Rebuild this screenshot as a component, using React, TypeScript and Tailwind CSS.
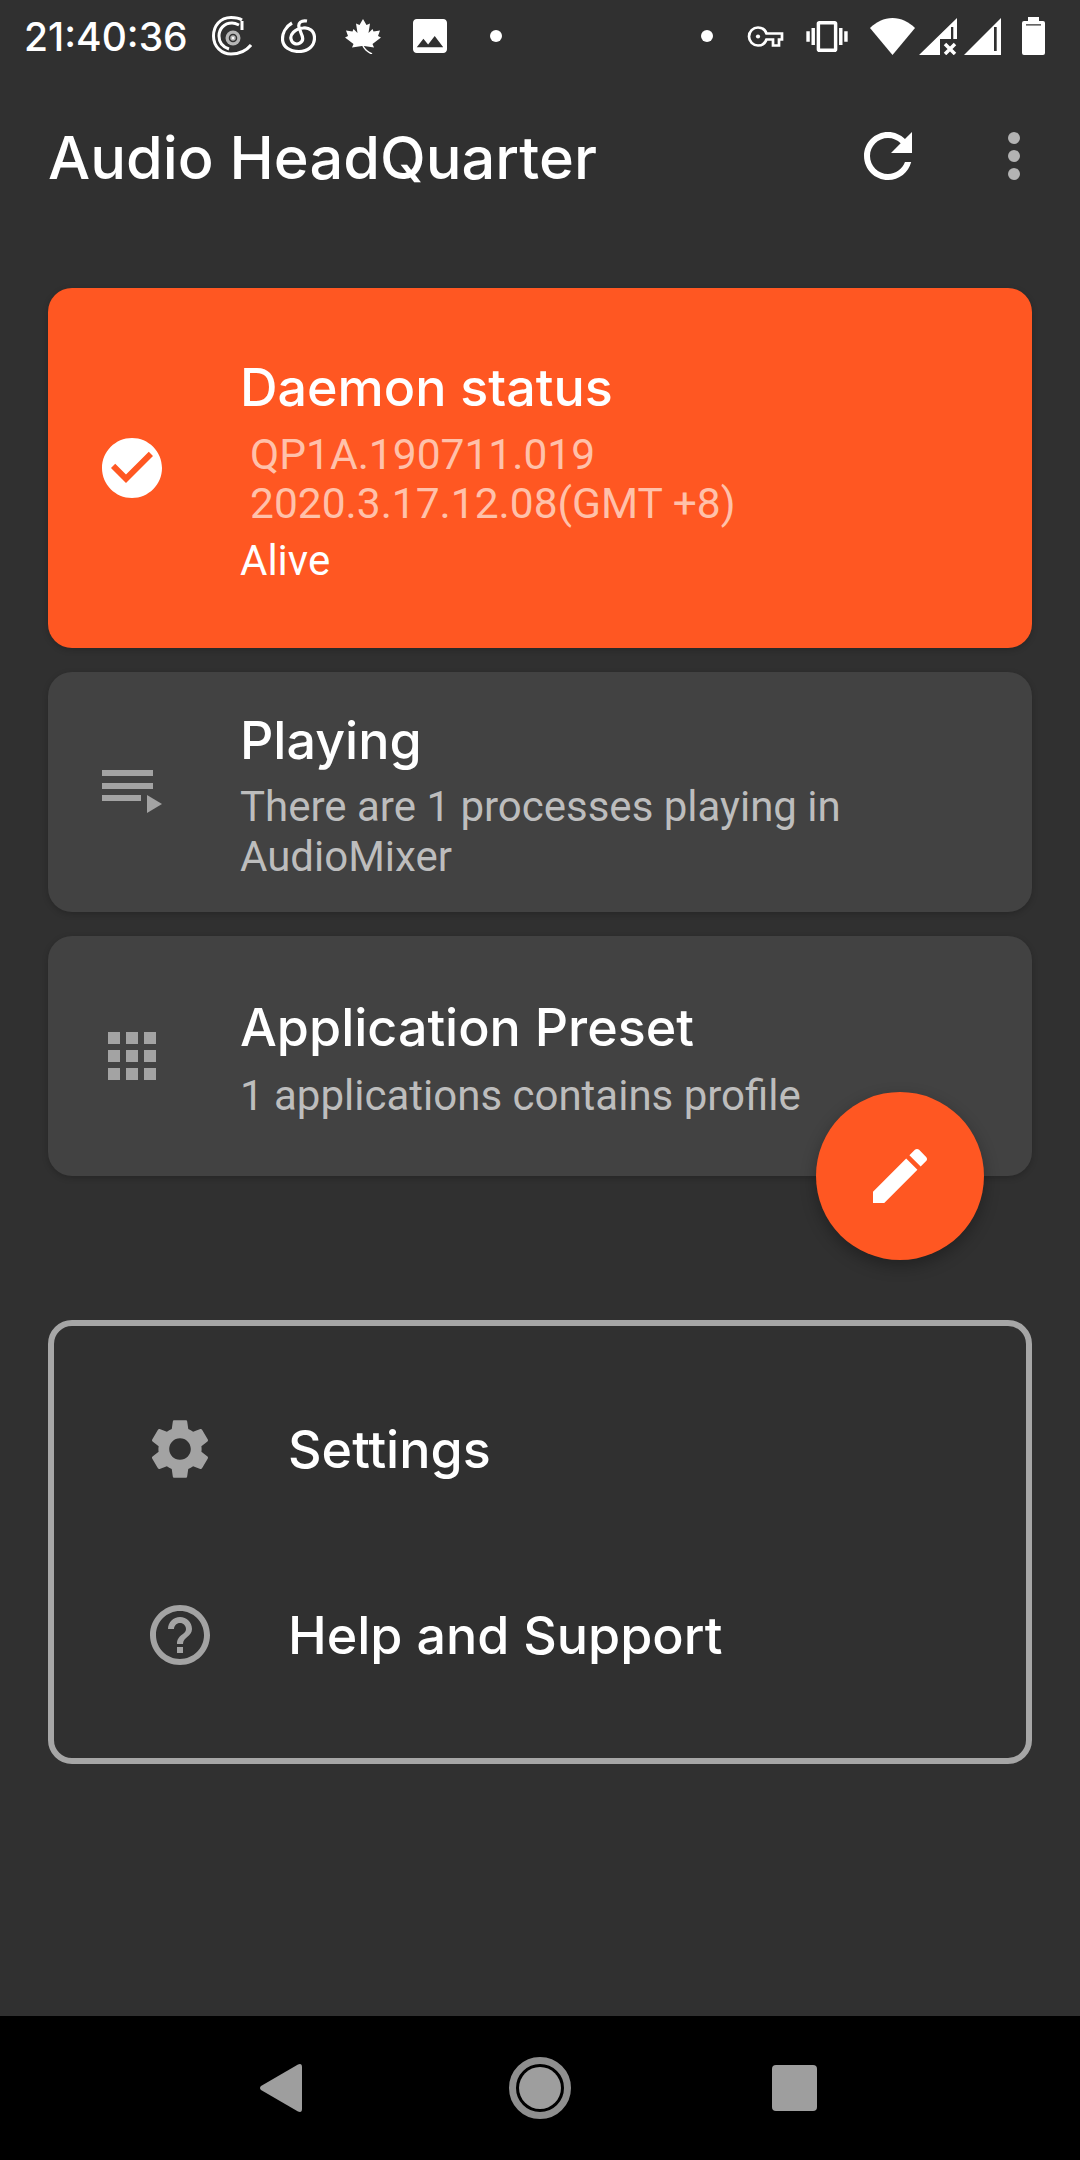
import type { ReactNode } from "react";

const GOOGLE = "font-['Inter','Noto_Sans',sans-serif]";

const StatusBar = () => (
  <div className="h-[72px] flex items-center justify-between pl-[24px] pr-[35px] text-white shrink-0">
    <div className="flex items-center">
      <span className={`${GOOGLE} text-[39px] leading-none w-[161px] font-[450]`}>21:40:36</span>
      {/* player notification icon */}
      <svg width="40" height="40" viewBox="0 0 40 40" className="ml-[27px]" fill="none" stroke="white" strokeWidth="3">
        <path d="M30 4 C27 2 23 1.500 19 1.500 C8 1.500 1.500 10 1.500 20 C1.500 31 10 38 19 38 C27 38 34 35 39 29" />
        <path d="M30 5 V14 M27 9 C25 8 22 7 20 7 C12 7 7 13 7 20 C7 27 11 31 17 33" />
        <circle cx="21" cy="22" r="7.500" fill="#b5b5b5" stroke="none" />
        <circle cx="21" cy="22" r="3.500" fill="none" stroke="#303030" strokeWidth="1.500" />
        <circle cx="21" cy="22" r="1.200" fill="white" stroke="none" />
      </svg>
      {/* netease music style icon */}
      <svg width="35" height="34" viewBox="0 0 35 34" className="ml-[29px]" fill="none" stroke="white" strokeWidth="3.200">
        <path d="M11 4 C4 8 1.500 15 1.500 20 C1.500 28 9 32.500 18 32.500 C27 32.500 33.500 27 33.500 19 C33.500 12 28 8 22 9 C13 10 9 16 10 20 C11 25 16 26 19 24 C23 22 22 18 20 14 L18 8 C17 4 20 1 26 2" />
      </svg>
      {/* maple leaf */}
      <svg width="37" height="35" viewBox="0 0 37 35" fill="white" className="ml-[29px]">
        <path d="M18 0 L14.500 6 L11 4.500 L12.500 14 L8.500 10 L7.500 12.500 L1 11.500 L3 17 L0 18.500 L8.500 25 L7 28.500 L17 27 L19 27 L29 28.500 L27.500 25 L36 18.500 L33 17 L35 11.500 L28.500 12.500 L27.500 10 L23.500 14 L25 4.500 L21.500 6 Z" />
        <path d="M18 27 C20 31 23 33 27 35" fill="none" stroke="white" strokeWidth="1.500" />
      </svg>
      <svg width="34" height="34" viewBox="3 3 18 18" fill="white" className="ml-[31px]">
        <path d="M21 19V5c0-1.100-.9-2-2-2H5c-1.100 0-2 .9-2 2v14c0 1.100.9 2 2 2h14c1.100 0 2-.9 2-2zM8.500 13.500l2.500 3.010L14.500 12l4.500 6H5l3.500-4.500z" />
      </svg>
      <div className="w-3 h-3 rounded-full bg-white ml-[43px]" />
    </div>
    <div className="flex items-center">
      <div className="w-3 h-3 rounded-full bg-white" />
      <svg width="37" height="21" viewBox="0 5 24 14" className="ml-[34px]" fill="none" stroke="white" strokeWidth="1.800">
        <path d="M12.650 10C11.830 7.670 9.610 6 7 6c-3.310 0-6 2.690-6 6s2.690 6 6 6c2.610 0 4.830-1.670 5.650-4H17v4h4v-4h2v-4H12.650z" />
        <circle cx="7" cy="12" r="1.400" fill="white" stroke="none" />
      </svg>
      <svg width="42" height="31" viewBox="0 3 24 18" fill="white" className="ml-[22px]">
        <path d="M0 15h2V9H0v6zm3 2h2V7H3v10zm19-8v6h2V9h-2zm-3 8h2V7h-2v10zM16.500 3h-9C6.670 3 6 3.670 6 4.500v15c0 .83.67 1.500 1.500 1.500h9c.83 0 1.500-.67 1.500-1.500v-15c0-.83-.67-1.500-1.500-1.500zM16 19H8V5h8v14z" />
      </svg>
      <svg width="45" height="37" viewBox="0 0 45 37" fill="white" className="ml-[22px]">
        <path d="M22.500 37 L0 10 C6 4 14 0 22.500 0 C31 0 39 4 45 10 Z" />
      </svg>
      <svg width="38" height="37" viewBox="0 0 38 37" fill="white" className="ml-[4px]">
        <path d="M0 37 L38 0 V21 H34.300 V9 H32 V21 H21 V37 Z" />
        <path d="M26 26 L36 36 M36 26 L26 36" stroke="white" strokeWidth="3.500" />
      </svg>
      <svg width="37" height="37" viewBox="0 0 37 37" fill="white" className="ml-[7px]">
        <path fillRule="evenodd" d="M0 37 L37 0 V37 Z M30 9 H32.700 V33 H30 Z" />
      </svg>
      <svg width="23" height="38" viewBox="0 0 23 38" fill="white" className="ml-[21px]">
        <path fillRule="evenodd" d="M6 0h11v4h4a2 2 0 0 1 2 2v30a2 2 0 0 1-2 2H2a2 2 0 0 1-2-2V6a2 2 0 0 1 2-2h4z M4 7.300v1.300h15V7.300z" />
      </svg>
    </div>
  </div>
);

const Toolbar = () => (
  <div className="h-[168px] flex items-center pl-[48px] shrink-0">
    <h1 className={`${GOOGLE} text-white text-[59.5px] leading-none flex-1 mt-[3px] font-[450]`}>Audio HeadQuarter</h1>
    <svg width="72" height="72" viewBox="0 0 24 24" fill="white" className="mr-[84px]">
      <path d="M17.650 6.350C16.200 4.900 14.210 4 12 4c-4.420 0-7.990 3.580-7.990 8s3.570 8 7.990 8c3.730 0 6.840-2.550 7.730-6h-2.080c-.82 2.330-3.040 4-5.650 4-3.310 0-6-2.690-6-6s2.690-6 6-6c1.660 0 3.140.69 4.220 1.780L13 11h7V4l-2.350 2.350z" />
    </svg>
    <div className="flex flex-col gap-[6px] mr-[60px]">
      <div className="w-3 h-3 rounded-full bg-[#b3b3b3]" />
      <div className="w-3 h-3 rounded-full bg-[#b3b3b3]" />
      <div className="w-3 h-3 rounded-full bg-[#b3b3b3]" />
    </div>
  </div>
);

const Card = ({
  icon,
  title,
  className,
  bodyClassName,
  children,
}: {
  icon: ReactNode;
  title: string;
  className: string;
  bodyClassName: string;
  children: ReactNode;
}) => (
  <div className={`flex items-center pl-[48px] rounded-[24px] shadow-[0_2px_6px_rgba(0,0,0,0.2)] ${className}`}>
    <div className="w-[72px] h-[72px] shrink-0 flex items-center justify-center">{icon}</div>
    <div className={`ml-[72px] flex-1 font-['Roboto',sans-serif] pr-[48px] ${bodyClassName}`}>
      <div className={`${GOOGLE} font-medium text-white text-[52px] leading-[64px]`}>{title}</div>
      {children}
    </div>
  </div>
);

const App = () => (
  <div className="w-[1080px] h-[2160px] flex flex-col bg-[#303030]">
    <StatusBar />
    <Toolbar />
    <div className="flex-1 px-[48px] pt-[48px]">
      <div className="relative flex flex-col gap-[24px]">
        <Card
          className="h-[360px] bg-[#ff5722]"
          bodyClassName="pt-[4px]"
          title="Daemon status"
          icon={
            <svg width="72" height="72" viewBox="0 0 24 24" fill="white">
              <path d="M12 2C6.480 2 2 6.480 2 12s4.480 10 10 10 10-4.480 10-10S17.520 2 12 2zm-2 15l-5-5 1.410-1.410L10 14.170l7.590-7.590L19 8l-9 9z" />
            </svg>
          }
        >
          <div className="pl-[10px] text-[#ffc1aa] text-[42.5px] leading-[49px] mt-[10px]">
            <div>QP1A.190711.019</div>
            <div>2020.3.17.12.08(GMT +8)</div>
          </div>
          <div className="text-white text-[42px] leading-[49px] mt-[8px]">Alive</div>
        </Card>
        <Card
          className="h-[240px] bg-[#424242]"
          bodyClassName="pt-[7px]"
          title="Playing"
          icon={
            <svg width="72" height="72" viewBox="0 0 72 72" fill="#a3a3a3">
              <rect x="6" y="14" width="51" height="6" />
              <rect x="6" y="27" width="51" height="6" />
              <rect x="6" y="39" width="39" height="6" />
              <path d="M51 39 L66 48 L51 57 Z" />
            </svg>
          }
        >
          <div className="text-[#bdbdbd] text-[42px] leading-[50px] mt-[9px]">
            There are 1 processes playing in AudioMixer
          </div>
        </Card>
        <Card
          className="h-[240px] bg-[#424242]"
          bodyClassName="pt-[4px]"
          title="Application Preset"
          icon={
            <svg width="72" height="72" viewBox="0 0 72 72" fill="#a3a3a3">
              <rect x="12" y="12" width="12" height="12" />
              <rect x="30" y="12" width="12" height="12" />
              <rect x="48" y="12" width="12" height="12" />
              <rect x="12" y="30" width="12" height="12" />
              <rect x="30" y="30" width="12" height="12" />
              <rect x="48" y="30" width="12" height="12" />
              <rect x="12" y="48" width="12" height="12" />
              <rect x="30" y="48" width="12" height="12" />
              <rect x="48" y="48" width="12" height="12" />
            </svg>
          }
        >
          <div className="text-[#bdbdbd] text-[42px] leading-[50px] mt-[11px]">1 applications contains profile</div>
        </Card>
        {/* FAB */}
        <div className="absolute left-[768px] top-[804px] w-[168px] h-[168px] rounded-full bg-[#ff5722] flex items-center justify-center shadow-[0_6px_16px_rgba(0,0,0,0.3)]">
          <svg width="72" height="72" viewBox="0 0 24 24" fill="white">
            <path d="M3 17.250V21h3.750L17.810 9.940l-3.750-3.750L3 17.250zM20.710 7.040c.39-.39.39-1.020 0-1.410l-2.340-2.340c-.39-.39-1.020-.39-1.410 0l-1.830 1.830 3.750 3.750 1.830-1.830z" />
          </svg>
        </div>
      </div>

      <div className="mt-[144px] h-[444px] border-[6px] border-[#a6a6a6] rounded-[24px] flex flex-col justify-center">
        <div className="h-[186px] flex items-center pl-[90px]">
          <svg width="72" height="72" viewBox="0 0 24 24" fill="#a3a3a3">
            <path d="M19.140 12.940c.04-.3.06-.61.06-.94 0-.32-.02-.64-.07-.94l2.030-1.580c.18-.14.23-.41.12-.61l-1.920-3.320c-.12-.22-.37-.29-.59-.22l-2.390.96c-.5-.38-1.030-.7-1.620-.94l-.36-2.540c-.04-.24-.24-.41-.48-.41h-3.840c-.24 0-.43.17-.47.41l-.36 2.540c-.59.24-1.130.57-1.620.94l-2.390-.96c-.22-.08-.47 0-.59.22L2.740 8.870c-.12.21-.08.47.12.61l2.030 1.580c-.05.3-.09.63-.09.94s.02.64.07.94l-2.030 1.580c-.18.14-.23.41-.12.61l1.920 3.320c.12.22.37.29.59.22l2.390-.96c.5.38 1.030.7 1.620.94l.36 2.540c.05.24.24.41.48.41h3.840c.24 0 .44-.17.47-.41l.36-2.540c.59-.24 1.130-.56 1.620-.94l2.390.96c.22.08.47 0 .59-.22l1.920-3.320c.12-.22.07-.47-.12-.61l-2.010-1.580zM12 15.600c-1.980 0-3.600-1.620-3.600-3.600s1.620-3.600 3.600-3.600 3.600 1.620 3.600 3.600-1.620 3.600-3.600 3.600z" />
          </svg>
          <span className={`${GOOGLE} font-medium text-white text-[52px] ml-[72px] mt-[2px]`}>Settings</span>
        </div>
        <div className="h-[186px] flex items-center pl-[90px]">
          <svg width="72" height="72" viewBox="0 0 24 24" fill="#a3a3a3">
            <path d="M11 18h2v-2h-2v2zm1-16C6.480 2 2 6.480 2 12s4.480 10 10 10 10-4.480 10-10S17.520 2 12 2zm0 18c-4.410 0-8-3.590-8-8s3.590-8 8-8 8 3.590 8 8-3.590 8-8 8zm0-14c-2.210 0-4 1.790-4 4h2c0-1.100.9-2 2-2s2 .9 2 2c0 2-3 1.750-3 5h2c0-2.250 3-2.500 3-5 0-2.210-1.790-4-4-4z" />
          </svg>
          <span className={`${GOOGLE} font-medium text-white text-[52px] ml-[72px] mt-[2px]`}>Help and Support</span>
        </div>
      </div>
    </div>

    <div className="h-[144px] bg-black flex items-center pl-[260px] shrink-0">
      <svg width="42" height="48" viewBox="0 0 42 48" fill="#9e9e9e">
        <path d="M1 22 L38 0.500 Q42 -1 42 3 V45 Q42 49 38 47.500 L1 26 Q-1 24 1 22 Z" />
      </svg>
      <div className="ml-[207px] w-[62px] h-[62px] rounded-full border-[7px] border-[#8f8f8f] flex items-center justify-center">
        <div className="w-[42px] h-[42px] shrink-0 rounded-full bg-[#9e9e9e]" />
      </div>
      <div className="ml-[201px] w-[45px] h-[46px] rounded-[4px] bg-[#9e9e9e]" />
    </div>
  </div>
);

export default App;
